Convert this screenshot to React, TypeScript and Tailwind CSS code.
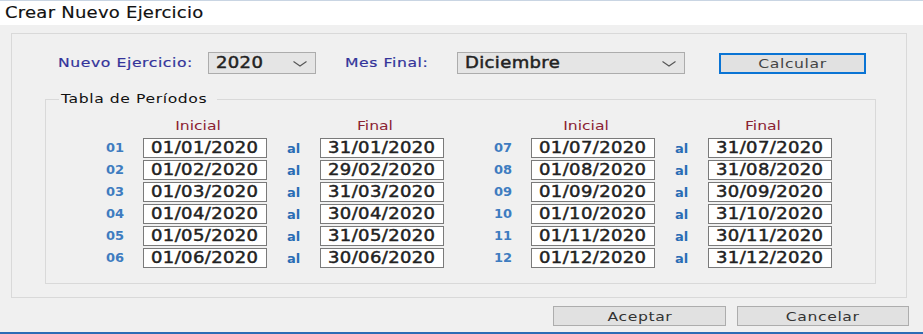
import type { ReactNode } from "react";

const MONTHS = [31, 29, 31, 30, 31, 30, 31, 31, 30, 31, 30, 31];

const pad = (n: number) => String(n).padStart(2, "0");

const periods = MONTHS.map((last, i) => ({
  num: pad(i + 1),
  start: `01/${pad(i + 1)}/2020`,
  end: `${last}/${pad(i + 1)}/2020`,
}));

// the old WinForms dialog was captured stretched, so glyphs get widened a bit
function Wide({ children, className = "" }: { children: ReactNode; className?: string }) {
  return <span className={`inline-block scale-x-[1.2] ${className}`}>{children}</span>;
}

function DateBox({ value }: { value: string }) {
  return (
    <div className="h-[20px] border border-[#7a7a7a] bg-white flex items-center justify-center text-[15px] text-[#222] leading-none">
      <Wide className="tracking-[0.3px] [-webkit-text-stroke:0.45px_#222]">{value}</Wide>
    </div>
  );
}

function PeriodHalf({ rows }: { rows: typeof periods }) {
  return (
    <div className="grid grid-cols-[37px_124px_53px_124px] gap-y-[2px] content-start">
      <div />
      <div className="h-[16px] pr-[14px] text-center text-[13px] text-[#8b2232] leading-[16px] mb-[2px]">
        <Wide>Inicial</Wide>
      </div>
      <div />
      <div className="h-[16px] pr-[14px] text-center text-[13px] text-[#8b2232] leading-[16px] mb-[2px]">
        <Wide>Final</Wide>
      </div>
      {rows.map((r) => (
        <div key={r.num} className="contents">
          <div className="h-[20px] flex items-center text-[13px] font-bold text-[#3e7cc0]">{r.num}</div>
          <DateBox value={r.start} />
          <div className="h-[20px] flex items-center pl-[20px] pt-[2px] text-[13px] font-bold text-[#2a6db5]">al</div>
          <DateBox value={r.end} />
        </div>
      ))}
    </div>
  );
}

function Combo({ value, width }: { value: string; width: string }) {
  return (
    <div className={`${width} h-[22px] border border-[#acacac] bg-[#e5e5e5] flex items-center justify-between pl-[7px] pr-[8px]`}>
      <Wide className="origin-left text-[15px] tracking-[0.3px] text-[#222] leading-none [-webkit-text-stroke:0.45px_#222]">
        {value}
      </Wide>
      <svg width="14" height="6" viewBox="0 0 14 6" className="mt-[2px]">
        <polyline points="0.5,0.5 7,5 13.5,0.5" fill="none" stroke="#555" strokeWidth="1.1" />
      </svg>
    </div>
  );
}

export default function App() {
  return (
    <div
      className="w-[923px] h-[334px] bg-[#f0f0f0] flex flex-col overflow-hidden"
      style={{ fontFamily: '"DejaVu Sans", Verdana, sans-serif' }}
    >
      {/* Title bar */}
      <div className="h-[25px] bg-white border-t border-[#c9d5e3] flex items-center pl-[5px] text-[15px] text-[#111]">
        <Wide className="origin-left tracking-[0.2px] [-webkit-text-stroke:0.15px_#111]">Crear Nuevo Ejercicio</Wide>
      </div>

      {/* Outer group */}
      <div className="mt-[8px] ml-[11px] w-[896px] h-[265px] border border-[#d9d9d9] flex flex-col">
        <div className="pt-[18px] pl-[46px] flex items-center">
          <div className="w-[150px] text-[13px] text-[#33339a]">
            <Wide className="origin-left tracking-[0.5px] [-webkit-text-stroke:0.2px_#33339a]">Nuevo Ejercicio:</Wide>
          </div>
          <Combo value="2020" width="w-[108px]" />
          <div className="ml-[29px] w-[112px] text-[13px] text-[#33339a]">
            <Wide className="origin-left tracking-[0.5px] [-webkit-text-stroke:0.2px_#33339a]">Mes Final:</Wide>
          </div>
          <Combo value="Diciembre" width="w-[228px]" />
          <button className="ml-[34px] w-[147px] h-[21px] border-2 border-[#0a74d4] bg-[#e1e1e1] text-[13px] text-[#444] leading-none">
            <Wide className="tracking-[0.5px]">Calcular</Wide>
          </button>
        </div>

        {/* Tabla de Períodos */}
        <div className="relative mt-[25px] ml-[33px] w-[831px] h-[185px] border border-[#d9d9d9]">
          <div className="absolute -top-[10px] left-[13px] bg-[#f0f0f0] px-[2px] w-[158px] text-[13px] text-[#111] leading-[18px]">
            <Wide className="origin-left tracking-[0.5px]">Tabla de Períodos</Wide>
          </div>
          <div className="pt-[18px] pl-[60px] flex gap-x-[50px]">
            <PeriodHalf rows={periods.slice(0, 6)} />
            <PeriodHalf rows={periods.slice(6)} />
          </div>
        </div>
      </div>

      {/* Buttons */}
      <div className="mt-[8px] pr-[14px] flex justify-end gap-[11px]">
        <button className="w-[173px] h-[20px] border border-[#adadad] bg-[#e1e1e1] text-[13px] text-[#333] leading-none">
          <Wide className="tracking-[0.5px]">Aceptar</Wide>
        </button>
        <button className="w-[172px] h-[20px] border border-[#adadad] bg-[#e1e1e1] text-[13px] text-[#333] leading-none">
          <Wide className="tracking-[0.5px]">Cancelar</Wide>
        </button>
      </div>

      <div className="mt-[6px] h-[2px] bg-[#2b6cb5]" />
    </div>
  );
}
